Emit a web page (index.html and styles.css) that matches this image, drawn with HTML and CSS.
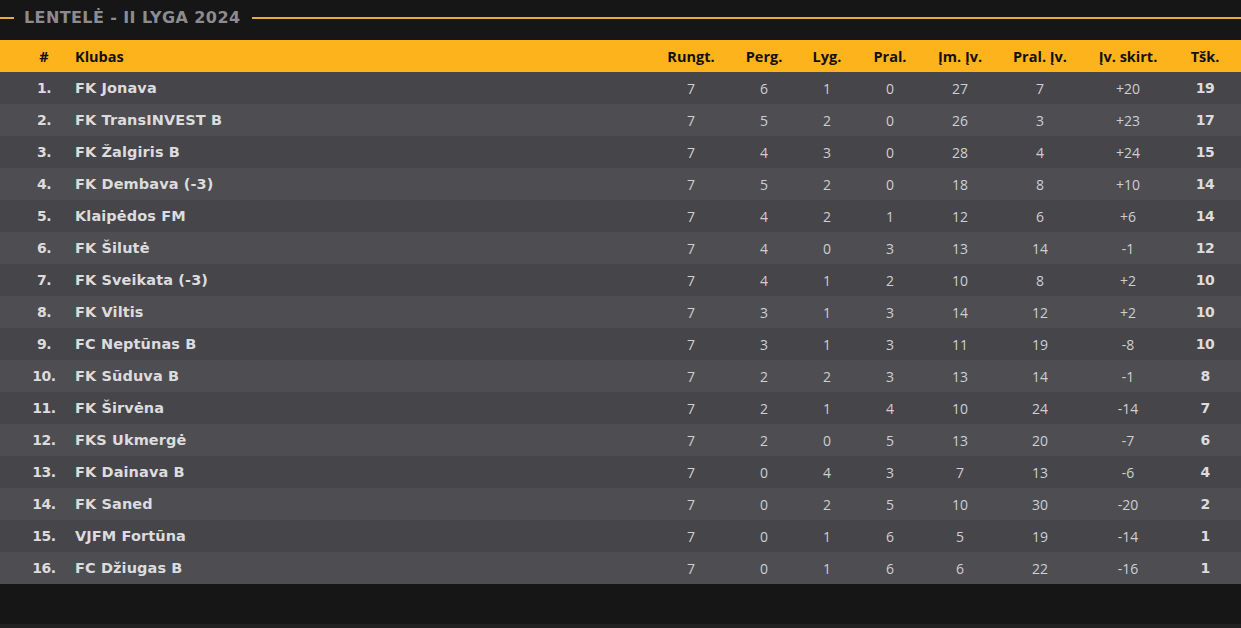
FILE: index.html
```html
<!DOCTYPE html>
<html lang="lt">
<head>
<meta charset="utf-8">
<title>Lentelė - II Lyga 2024</title>
<link rel="stylesheet" href="styles.css">
</head>
<body>
<section class="standings">
  <div class="title-bar">
    <span class="line line-short"></span>
    <h2 class="title">LENTELĖ - II LYGA 2024</h2>
    <span class="line line-long"></span>
  </div>
  <table class="table">
    <colgroup>
      <col class="c-rank"><col class="c-club"><col class="c-rung"><col class="c-perg"><col class="c-lyg"><col class="c-pral"><col class="c-im"><col class="c-prali"><col class="c-skirt"><col class="c-tsk">
    </colgroup>
    <thead>
      <tr><th>#</th><th class="club">Klubas</th><th>Rungt.</th><th>Perg.</th><th>Lyg.</th><th>Pral.</th><th>Įm. Įv.</th><th>Pral. Įv.</th><th>Įv. skirt.</th><th>Tšk.</th></tr>
    </thead>
    <tbody>
      <tr><td class="rank">1.</td><td class="club">FK Jonava</td><td>7</td><td>6</td><td>1</td><td>0</td><td>27</td><td>7</td><td>+20</td><td class="pts">19</td></tr>
      <tr><td class="rank">2.</td><td class="club">FK TransINVEST B</td><td>7</td><td>5</td><td>2</td><td>0</td><td>26</td><td>3</td><td>+23</td><td class="pts">17</td></tr>
      <tr><td class="rank">3.</td><td class="club">FK Žalgiris B</td><td>7</td><td>4</td><td>3</td><td>0</td><td>28</td><td>4</td><td>+24</td><td class="pts">15</td></tr>
      <tr><td class="rank">4.</td><td class="club">FK Dembava (-3)</td><td>7</td><td>5</td><td>2</td><td>0</td><td>18</td><td>8</td><td>+10</td><td class="pts">14</td></tr>
      <tr><td class="rank">5.</td><td class="club">Klaipėdos FM</td><td>7</td><td>4</td><td>2</td><td>1</td><td>12</td><td>6</td><td>+6</td><td class="pts">14</td></tr>
      <tr><td class="rank">6.</td><td class="club">FK Šilutė</td><td>7</td><td>4</td><td>0</td><td>3</td><td>13</td><td>14</td><td>-1</td><td class="pts">12</td></tr>
      <tr><td class="rank">7.</td><td class="club">FK Sveikata (-3)</td><td>7</td><td>4</td><td>1</td><td>2</td><td>10</td><td>8</td><td>+2</td><td class="pts">10</td></tr>
      <tr><td class="rank">8.</td><td class="club">FK Viltis</td><td>7</td><td>3</td><td>1</td><td>3</td><td>14</td><td>12</td><td>+2</td><td class="pts">10</td></tr>
      <tr><td class="rank">9.</td><td class="club">FC Neptūnas B</td><td>7</td><td>3</td><td>1</td><td>3</td><td>11</td><td>19</td><td>-8</td><td class="pts">10</td></tr>
      <tr><td class="rank">10.</td><td class="club">FK Sūduva B</td><td>7</td><td>2</td><td>2</td><td>3</td><td>13</td><td>14</td><td>-1</td><td class="pts">8</td></tr>
      <tr><td class="rank">11.</td><td class="club">FK Širvėna</td><td>7</td><td>2</td><td>1</td><td>4</td><td>10</td><td>24</td><td>-14</td><td class="pts">7</td></tr>
      <tr><td class="rank">12.</td><td class="club">FKS Ukmergė</td><td>7</td><td>2</td><td>0</td><td>5</td><td>13</td><td>20</td><td>-7</td><td class="pts">6</td></tr>
      <tr><td class="rank">13.</td><td class="club">FK Dainava B</td><td>7</td><td>0</td><td>4</td><td>3</td><td>7</td><td>13</td><td>-6</td><td class="pts">4</td></tr>
      <tr><td class="rank">14.</td><td class="club">FK Saned</td><td>7</td><td>0</td><td>2</td><td>5</td><td>10</td><td>30</td><td>-20</td><td class="pts">2</td></tr>
      <tr><td class="rank">15.</td><td class="club">VJFM Fortūna</td><td>7</td><td>0</td><td>1</td><td>6</td><td>5</td><td>19</td><td>-14</td><td class="pts">1</td></tr>
      <tr><td class="rank">16.</td><td class="club">FC Džiugas B</td><td>7</td><td>0</td><td>1</td><td>6</td><td>6</td><td>22</td><td>-16</td><td class="pts">1</td></tr>
    </tbody>
  </table>
  <div class="spacer"></div>
</section>
<div class="footer-strip"></div>
</body>
</html>
```

FILE: styles.css
```css
html, body {
  margin: 0;
  padding: 0;
  background: #161616;
}
body {
  font-family: "Open Sans", "DejaVu Sans", sans-serif;
  width: 1241px;
  height: 628px;
  overflow: hidden;
}
.standings {
  background: #161616;
}
.title-bar {
  height: 40px;
  display: flex;
  align-items: center;
  padding-bottom: 5px;
  box-sizing: border-box;
}
.line {
  height: 2px;
  background: #eea93a;
}
.line-short {
  width: 14px;
}
.line-long {
  flex: 1;
}
.title {
  margin: 0 12px 0 10px;
  font-family: "DejaVu Sans", "Roboto", sans-serif;
  font-weight: 700;
  font-size: 16px;
  letter-spacing: 0.4px;
  color: #8c8c90;
  line-height: 20px;
  white-space: nowrap;
}
.table {
  width: 1241px;
  border-collapse: collapse;
  table-layout: fixed;
}
.c-rank { width: 64px; }
.c-club { width: 591px; }
.c-rung { width: 72px; }
.c-perg { width: 74px; }
.c-lyg { width: 52px; }
.c-pral { width: 74px; }
.c-im { width: 66px; }
.c-prali { width: 94px; }
.c-skirt { width: 82px; }
.c-tsk { width: 72px; }
thead tr {
  background: #fdb31b;
  height: 32px;
}
th {
  font-weight: 700;
  font-size: 14.5px;
  color: #111;
  text-align: center;
  padding: 0;
  white-space: nowrap;
}
th:first-child, td.rank {
  padding-left: 24px;
}
th.club, td.club {
  text-align: left;
  padding-left: 11px;
}
tbody tr {
  height: 32px;
  background: #46454a;
}
tbody tr:nth-child(even) {
  background: #4e4d52;
}
td {
  text-align: center;
  padding: 0;
  font-size: 14px;
  color: #cfcfd1;
  white-space: nowrap;
}
td.rank, td.club, td.pts {
  font-family: "DejaVu Sans", "Roboto", sans-serif;
  font-weight: 700;
  color: #dcdcde;
}
td.rank {
  font-size: 14px;
  letter-spacing: -0.5px;
}
td.club {
  font-size: 14.5px;
  letter-spacing: 0.1px;
}
td.pts {
  font-size: 14px;
  letter-spacing: -0.5px;
}
.spacer {
  height: 40px;
}
.footer-strip {
  height: 4px;
  background: #212121;
}
```
